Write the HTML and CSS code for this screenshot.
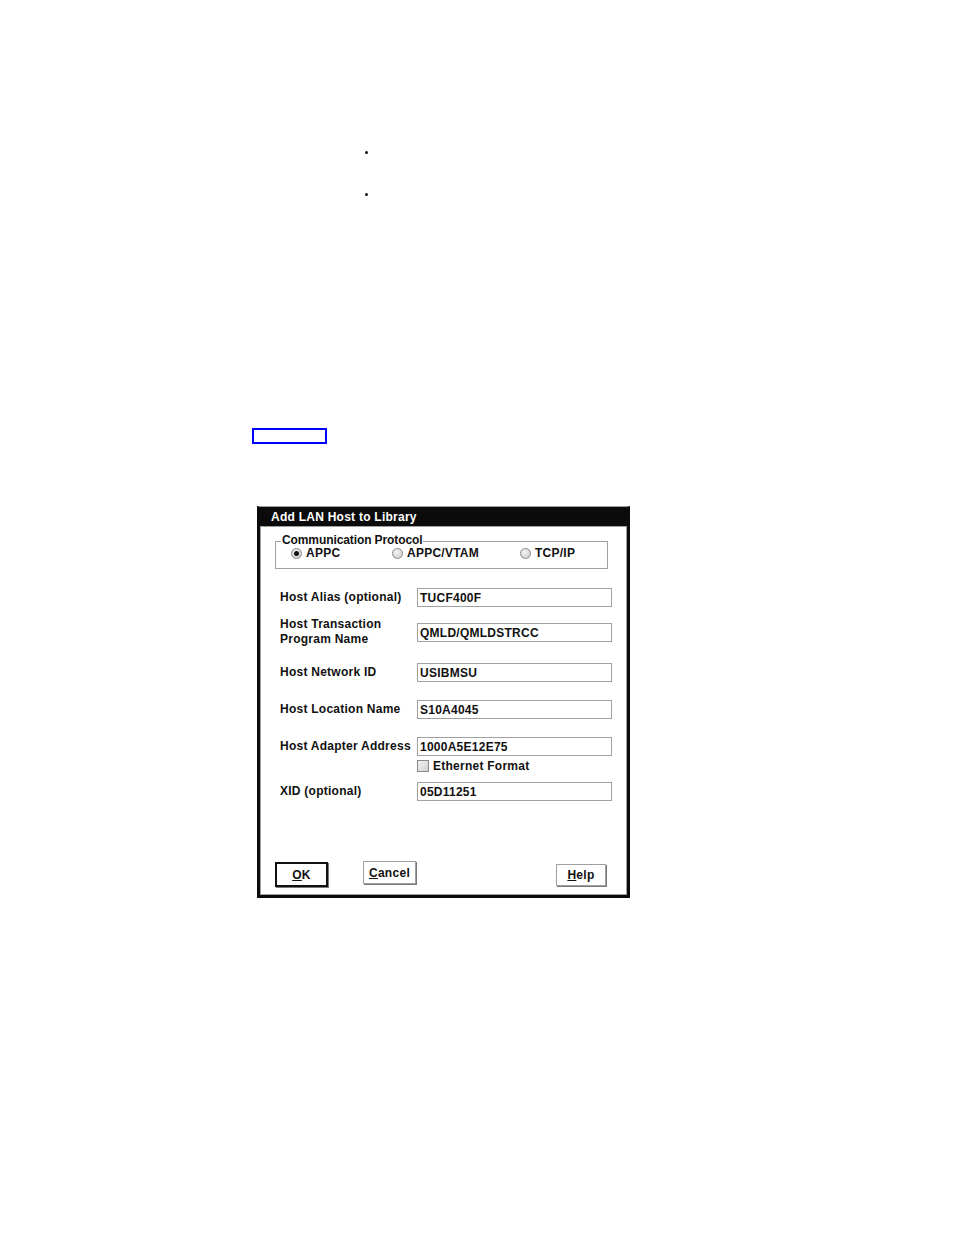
FILE: index.html
```html
<!DOCTYPE html>
<html>
<head>
<meta charset="utf-8">
<link rel="stylesheet" href="styles.css">
</head>
<body>
<div class="page">
  <ul class="bullets">
    <li></li>
    <li></li>
  </ul>
  <a class="link-box" href="#"></a>
  <div class="dialog">
    <div class="titlebar">Add LAN Host to Library</div>
    <div class="dialog-body">
      <div class="group">
        <span class="legend">Communication Protocol</span>
        <div class="radios">
          <span class="radio-item r1"><span class="radio checked"></span>APPC</span>
          <span class="radio-item r2"><span class="radio"></span>APPC/VTAM</span>
          <span class="radio-item r3"><span class="radio"></span>TCP/IP</span>
        </div>
      </div>
      <div class="row row-alias">
        <div class="label">Host Alias (optional)</div>
        <div class="field">TUCF400F</div>
      </div>
      <div class="row row-tp">
        <div class="label">Host Transaction<br>Program Name</div>
        <div class="field">QMLD/QMLDSTRCC</div>
      </div>
      <div class="row row-net">
        <div class="label">Host Network ID</div>
        <div class="field">USIBMSU</div>
      </div>
      <div class="row row-loc">
        <div class="label">Host Location Name</div>
        <div class="field">S10A4045</div>
      </div>
      <div class="row row-addr">
        <div class="label">Host Adapter Address</div>
        <div class="field">1000A5E12E75</div>
      </div>
      <div class="check-row"><span class="checkbox"></span>Ethernet Format</div>
      <div class="row row-xid">
        <div class="label">XID (optional)</div>
        <div class="field">05D11251</div>
      </div>
      <div class="buttons">
        <button class="btn btn-ok"><u>O</u>K</button>
        <button class="btn btn-cancel"><u>C</u>ancel</button>
        <button class="btn btn-help"><u>H</u>elp</button>
      </div>
    </div>
  </div>
</div>
</body>
</html>
```
FILE: styles.css
```css
html, body {
  margin: 0;
  padding: 0;
  background: #fff;
}
.page {
  width: 954px;
  height: 1235px;
  font-family: "Liberation Sans", Arial, sans-serif;
  color: #111;
}
.bullets {
  list-style: none;
  margin: 0;
  padding: 151px 0 0 365px;
}
.bullets li {
  width: 3px;
  height: 3px;
  border-radius: 50%;
  background: #111;
  margin-bottom: 39px;
}
.bullets li:last-child {
  margin-bottom: 0;
}
.link-box {
  display: block;
  margin: 232px 0 0 252px;
  width: 71px;
  height: 12px;
  border: 2px solid #0000ff;
}
.dialog {
  margin: 62px 0 0 257px;
  width: 373px;
  height: 392px;
  box-sizing: border-box;
  border: 3px solid #0b0b0b;
  border-top: 1px solid #a0a0a0;
  display: flex;
  flex-direction: column;
}
.titlebar {
  height: 19px;
  background: #0b0b0b;
  color: #fff;
  font-weight: bold;
  font-size: 12px;
  letter-spacing: 0.25px;
  line-height: 21px;
  margin: 0 -3px;
  padding-left: 14px;
}
.dialog-body {
  flex: 1;
  border: 1px solid #a0a0a0;
  font-size: 12px;
  font-weight: bold;
  letter-spacing: 0.25px;
}
.group {
  position: relative;
  margin: 14px 0 0 14px;
  width: 331px;
  height: 26px;
  border: 1px solid #a0a0a0;
}
.legend {
  position: absolute;
  left: 5px;
  top: -7px;
  background: #fff;
  padding: 0 1px;
  line-height: 11px;
  letter-spacing: -0.1px;
}
.radios {
  display: flex;
  height: 100%;
  align-items: center;
  padding: 0 0 4px 15px;
  box-sizing: border-box;
}
.radio-item {
  display: flex;
  align-items: center;
  gap: 4px;
  line-height: 11px;
}
.r1 { width: 101px; }
.r2 { width: 128px; }
.radio {
  width: 9px;
  height: 9px;
  border-radius: 50%;
  border: 1px solid #888;
  background: radial-gradient(circle at 40% 35%, #f4f4f4 0%, #d4d4d4 70%);
  position: relative;
}
.radio.checked::after {
  content: "";
  position: absolute;
  left: 2px;
  top: 2px;
  width: 5px;
  height: 5px;
  border-radius: 50%;
  background: #111;
}
.row {
  display: flex;
  align-items: center;
  margin-left: 19px;
}
.label {
  width: 137px;
  line-height: 15px;
}
.field {
  height: 17px;
  border: 1px solid #a0a0a0;
  line-height: 18px;
  padding-left: 2px;
  width: 191px;
}
.row-alias { margin-top: 19px; }
.row-tp { margin-top: 10px; }
.row-net { margin-top: 16px; }
.row-loc { margin-top: 18px; }
.row-addr { margin-top: 18px; }
.check-row {
  display: flex;
  align-items: center;
  gap: 4px;
  margin: 4px 0 0 156px;
  line-height: 12px;
}
.checkbox {
  width: 10px;
  height: 10px;
  border: 1px solid #888;
  background: linear-gradient(135deg, #f4f4f4, #d0d0d0);
}
.row-xid { margin-top: 10px; }
.buttons {
  margin: 60px 0 0 14px;
  height: 27px;
  display: flex;
  align-items: flex-start;
}
.btn {
  font-family: inherit;
  font-size: 12px;
  font-weight: bold;
  letter-spacing: 0.3px;
  color: #111;
  background: #fff;
  padding: 0;
  border: 1px solid #a0a0a0;
  box-shadow: 1px 1px 0 #777;
  box-sizing: border-box;
}
.btn-ok {
  width: 53px;
  height: 25px;
  border: 2px solid #111;
  margin-top: 1px;
}
.btn-cancel {
  width: 53px;
  height: 23px;
  margin-left: 35px;
}
.btn-help {
  width: 50px;
  height: 22px;
  margin-left: 140px;
  margin-top: 3px;
}
```
